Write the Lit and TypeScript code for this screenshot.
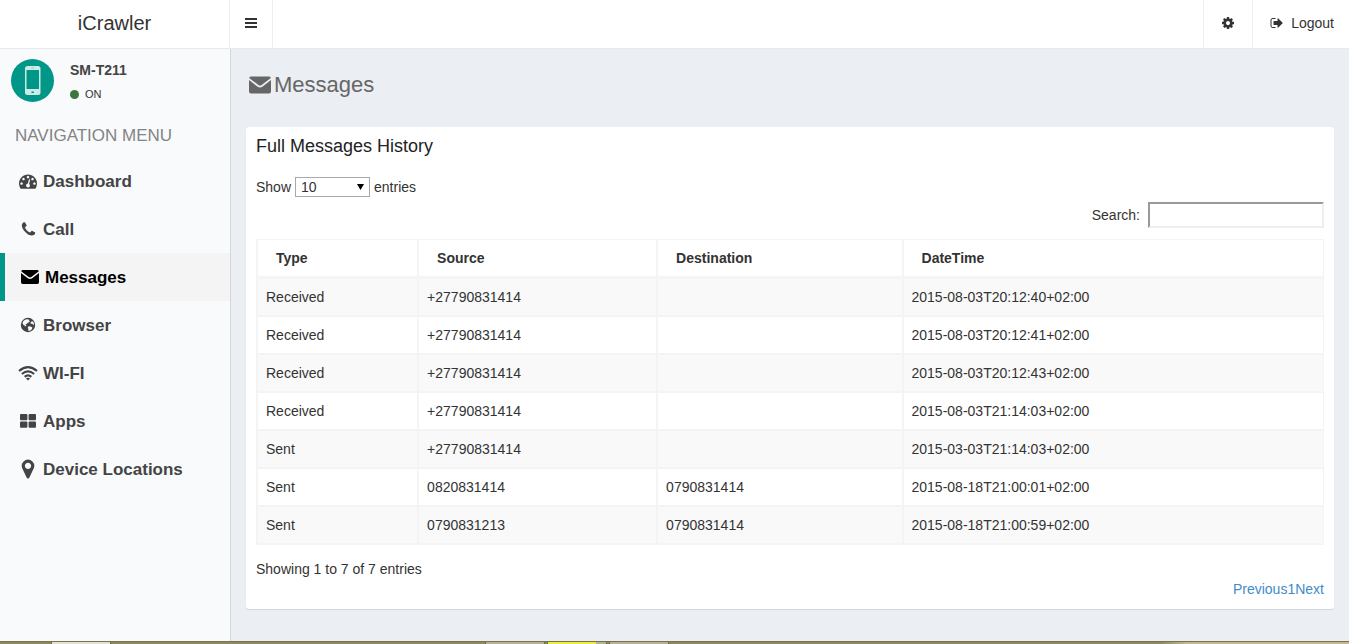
import { LitElement, html, css, svg } from "lit";
import { customElement, property, state } from "lit/decorators.js";

const fa = (d: string) => svg`<path d=${d} />`;

const icons: Record<string, { box: string; art: unknown }> = {
  dashboard: {
    box: "0 0 1792 1792",
    art: fa(
      "M384 1152q0-53-37.5-90.5t-90.5-37.5-90.5 37.5-37.5 90.5 37.5 90.5 90.5 37.5 90.5-37.5 37.5-90.5zm192-448q0-53-37.5-90.5t-90.5-37.5-90.5 37.5-37.5 90.5 37.5 90.5 90.5 37.5 90.5-37.5 37.5-90.5zm428 481l101-382q6-26-7.5-48.5t-38.5-29.5-48 6.5-30 39.5l-101 382q-60 5-107 43.5t-63 98.5q-20 77 20 146t117 89 146-20 89-117q16-60-6-117t-72-91zm660-33q0-53-37.5-90.5t-90.5-37.5-90.5 37.5-37.5 90.5 37.5 90.5 90.5 37.5 90.5-37.5 37.5-90.5zm-640-640q0-53-37.5-90.5t-90.5-37.5-90.5 37.5-37.5 90.5 37.5 90.5 90.5 37.5 90.5-37.5 37.5-90.5zm448 192q0-53-37.5-90.5t-90.5-37.5-90.5 37.5-37.5 90.5 37.5 90.5 90.5 37.5 90.5-37.5 37.5-90.5zm320 448q0 261-141 483-19 29-54 29h-1402q-35 0-54-29-141-221-141-483 0-182 71-348t191-286 286-191 348-71 348 71 286 191 191 286 71 348z"
    ),
  },
  phone: {
    box: "0 0 1792 1792",
    art: fa(
      "M1600 1240q0 27-10 70.5t-21 68.5q-21 50-122 106-94 51-186 51-27 0-53-3.5t-57.5-12.5-47-14.5-55.5-20.5-49-18q-98-35-175-83-127-79-264-216t-216-264q-48-77-83-175-3-9-18-49t-20.5-55.5-14.5-47-12.5-57.5-3.5-53q0-92 51-186 56-101 106-122 25-11 68.5-21t70.5-10q14 0 21 3 18 6 53 76 11 19 30 54t35 63.5 31 53.5q3 4 17.5 25t21.5 35.5 7 28.5q0 20-28.5 50t-62 55-62 53-28.5 46q0 9 5 22.5t8.5 20.5 14 24 11.5 19q76 137 174 235t235 174q2 1 19 11.5t24 14 20.5 8.5 22.5 5q18 0 46-28.5t53-62 55-62 50-28.5q14 0 28.5 7t35.5 21.5 25 17.5q25 15 53.5 31t63.5 35 54 30q70 35 76 53 3 7 3 21z"
    ),
  },
  mail: {
    box: "0 0 22 22",
    art: svg`<path d="M0.2 3.9Q0.6 2.5 2.2 2.5H19.8Q21.4 2.5 21.8 3.9L12.6 11Q11 12.1 9.4 11Z" /><path d="M0 6L8.3 12.6Q11 14.5 13.7 12.6L22 6V17.5Q22 19.5 20 19.5H2Q0 19.5 0 17.5Z" />`,
  },
  globe: {
    box: "0 0 16 16",
    art: svg`<path fill-rule="evenodd" d="M8 .8A7.2 7.2 0 1 1 8 15.2A7.2 7.2 0 1 1 8 .8ZM6.8 2.2L5 2.8 3.2 4.3 2.5 6.2 3.4 7.8 4.8 8.8 6 9.4 6.3 8.3 5.4 7.4 6.9 6.8 7.8 5.7 9.4 5 9.8 4 8.8 3.4 9 2.5ZM11.2 4.8L10.4 6 10.9 6.8 12.4 6.8 13.2 7.9 14.1 7.2 13.5 5.3 12.4 4.3ZM8.6 9.3L7.8 10.6 8.4 12 8.3 14 10.4 13.5 11.8 12.2 12.4 10.6 10.6 9.5Z" />`,
  },
  wifi: {
    box: "0 0 20 16",
    art: svg`<g fill="none" stroke="currentColor" stroke-width="2.2"><path d="M1 6Q10-1.8 19 6" /><path d="M3.9 9Q10 3.6 16.1 9" /><path d="M6.7 11.9Q10 8.9 13.3 11.9" /></g><path d="M7.9 13.4Q10 11.9 12.1 13.4L10 15.4Z" />`,
  },
  apps: {
    box: "0 0 16 14",
    art: svg`<rect width="7.4" height="6.3" rx="1" /><rect x="8.6" width="7.4" height="6.3" rx="1" /><rect y="7.5" width="7.4" height="6.3" rx="1" /><rect x="8.6" y="7.5" width="7.4" height="6.3" rx="1" />`,
  },
  marker: {
    box: "0 0 1792 1792",
    art: fa(
      "M1152 640q0-106-75-181t-181-75-181 75-75 181 75 181 181 75 181-75 75-181zm256 0q0 109-33 179l-364 774q-16 33-47.5 52t-67.5 19-67.5-19-46.5-52l-365-774q-33-70-33-179 0-212 150-362t362-150 362 150 150 362z"
    ),
  },
  gear: {
    box: "0 0 1792 1792",
    art: fa(
      "M1152 896q0-106-75-181t-181-75-181 75-75 181 75 181 181 75 181-75 75-181zm512-109v222q0 12-8 23t-20 13l-185 28q-19 54-39 91 35 50 107 138 10 12 10 25t-9 23q-27 37-99 108t-94 71q-12 0-26-9l-138-108q-44 23-91 38-16 136-29 186-7 28-36 28h-222q-14 0-24.5-8.5t-11.5-21.5l-28-184q-49-16-90-37l-141 107q-10 9-25 9-14 0-25-11-126-114-165-168-7-10-7-23 0-12 8-23 15-21 51-66.5t54-70.5q-27-50-41-99l-183-27q-13-2-21-12.5t-8-23.5v-222q0-12 8-23t19-13l186-28q14-46 39-92-40-57-107-138-10-12-10-24 0-10 9-23 26-36 98.5-107.5t94.5-71.5q13 0 26 10l138 107q44-23 91-38 16-136 29-186 7-28 36-28h222q14 0 24.5 8.5t11.5 21.5l28 184q49 16 90 37l142-107q9-9 24-9 13 0 25 10 129 119 165 170 7 8 7 22 0 12-8 23-15 21-51 66.5t-54 70.5q26 50 41 98l183 28q13 2 21 12.5t8 23.5z"
    ),
  },
  signout: {
    box: "0 0 1792 1792",
    art: fa(
      "M704 1440q0 4 1 20t.5 26.5-3 23.5-10 19.5-20.5 6.5h-320q-119 0-203.5-84.5t-84.5-203.5v-704q0-119 84.5-203.5t203.5-84.5h320q13 0 22.5 9.5t9.5 22.5q0 4 1 20t.5 26.5-3 23.5-10 19.5-20.5 6.5h-320q-66 0-113 47t-47 113v704q0 66 47 113t113 47h312l11.5 1 11.5 3 8 5.5 7 9 2 13.5zm928-544q0 26-19 45l-544 544q-19 19-45 19t-45-19-19-45v-288h-448q-26 0-45-19t-19-45v-384q0-26 19-45t45-19h448v-288q0-26 19-45t45-19 45 19l544 544q19 19 19 45z"
    ),
  },
  bars: {
    box: "0 0 12 10",
    art: svg`<rect width="12" height="2" /><rect y="4" width="12" height="2" /><rect y="8" width="12" height="2" />`,
  },
};

@customElement("ui-icon")
class UiIcon extends LitElement {
  @property() name = "";
  @property({ type: Number }) size = 16;

  static styles = css`
    :host {
      display: inline-flex;
    }
    .glyph {
      display: block;
      fill: currentColor;
    }
  `;

  render() {
    const icon = icons[this.name];
    return html`<svg class="glyph" width=${this.size} height=${this.size} viewBox=${icon.box} aria-hidden="true">${icon.art}</svg>`;
  }
}

@customElement("side-nav")
class SideNav extends LitElement {
  @state() current = "Messages";

  items = [
    { label: "Dashboard", icon: "dashboard", size: 18 },
    { label: "Call", icon: "phone", size: 17 },
    { label: "Messages", icon: "mail", size: 18 },
    { label: "Browser", icon: "globe", size: 16 },
    { label: "WI-FI", icon: "wifi", size: 20 },
    { label: "Apps", icon: "apps", size: 16 },
    { label: "Device Locations", icon: "marker", size: 22 },
  ];

  static styles = css`
    :host {
      display: block;
      background: #f9fafc;
      border-right: 1px solid #d2d6de;
    }
    .device {
      display: flex;
      gap: 16px;
      padding: 10px 11px 0;
    }
    .avatar {
      display: block;
      width: 43px;
      height: 43px;
    }
    .name {
      margin: 0;
      font-size: 14px;
      line-height: 22px;
      font-weight: bold;
      color: #444;
    }
    .status {
      display: flex;
      align-items: center;
      gap: 6px;
      margin: 4px 0 0;
      font-size: 11px;
      line-height: 18px;
      color: #333;
    }
    .dot {
      width: 9px;
      height: 9px;
      border-radius: 50%;
      background: #3c763d;
    }
    .heading {
      margin: 0;
      padding: 22px 15px 10px;
      font-size: 17px;
      line-height: 22px;
      font-weight: normal;
      color: #848484;
    }
    .list {
      list-style: none;
      margin: 0;
      padding: 0;
    }
    .link {
      display: flex;
      align-items: center;
      gap: 5px;
      box-sizing: border-box;
      height: 48px;
      border-left: 5px solid transparent;
      padding: 2px 0 0 13px;
      color: #444;
      font-size: 17px;
      font-weight: bold;
      text-decoration: none;
    }
    .link.active {
      padding-left: 15px;
      border-left-color: #009688;
      background: #f4f4f5;
      color: #000;
    }
    .slot {
      display: flex;
      justify-content: center;
      width: 20px;
      padding-bottom: 2px;
    }
  `;

  render() {
    return html`
      <div class="device">
        <svg class="avatar" viewBox="0 0 43 43" role="img" aria-label="Device">
          <circle cx="21.5" cy="21.5" r="21.5" fill="#009688" />
          <rect x="14" y="7" width="15.5" height="29" rx="2.5" fill="#cdeae6" />
          <rect x="15.5" y="11" width="12.5" height="19" fill="#009688" />
          <rect x="20" y="8.6" width="3.5" height="0.9" rx="0.4" fill="#8fcfc8" />
          <rect x="20.3" y="32.6" width="2.8" height="1.4" rx="0.7" fill="#009688" />
        </svg>
        <div>
          <p class="name">SM-T211</p>
          <p class="status"><span class="dot"></span>ON</p>
        </div>
      </div>
      <h2 class="heading">NAVIGATION MENU</h2>
      <nav>
        <ul class="list">
          ${this.items.map(
            (i) => html`<li>
              <a class="link ${i.label === this.current ? "active" : ""}" href="#" @click=${(e: Event) => {
                e.preventDefault();
                this.current = i.label;
              }}><span class="slot"><ui-icon name=${i.icon} size=${i.size}></ui-icon></span>${i.label}</a>
            </li>`
          )}
        </ul>
      </nav>
    `;
  }
}

@customElement("message-history")
class MessageHistory extends LitElement {
  @state() query = "";

  rows = [
    ["Received", "+27790831414", "", "2015-08-03T20:12:40+02:00"],
    ["Received", "+27790831414", "", "2015-08-03T20:12:41+02:00"],
    ["Received", "+27790831414", "", "2015-08-03T20:12:43+02:00"],
    ["Received", "+27790831414", "", "2015-08-03T21:14:03+02:00"],
    ["Sent", "+27790831414", "", "2015-03-03T21:14:03+02:00"],
    ["Sent", "0820831414", "0790831414", "2015-08-18T21:00:01+02:00"],
    ["Sent", "0790831213", "0790831414", "2015-08-18T21:00:59+02:00"],
  ];

  static styles = css`
    :host {
      display: block;
      padding: 10px;
      background: #fff;
      border-radius: 3px;
      box-shadow: 0 1px 1px rgba(0, 0, 0, 0.1);
      font-size: 14px;
      line-height: 20px;
      color: #333;
    }
    .title {
      margin: 0;
      font-size: 18px;
      line-height: 18px;
      font-weight: normal;
      color: #222;
    }
    .length {
      display: flex;
      gap: 4px;
      margin-top: 22px;
    }
    .picker {
      position: relative;
      display: flex;
    }
    .select {
      appearance: none;
      width: 75px;
      height: 20px;
      border: 1px solid #a9a9a9;
      border-radius: 0;
      padding: 0 5px;
      background: #fff;
      font: inherit;
      line-height: 18px;
      color: #333;
    }
    .arrow {
      position: absolute;
      right: 6px;
      top: 7px;
      pointer-events: none;
    }
    .search {
      display: flex;
      justify-content: flex-end;
      align-items: center;
      gap: 8px;
      margin-top: 5px;
    }
    .field {
      box-sizing: border-box;
      width: 176px;
      height: 26px;
      border: 2px solid;
      border-color: #999 #eee #eee #999;
      padding: 1px 4px;
      background: #fff;
      font: inherit;
    }
    .table {
      width: 100%;
      margin: 11px 0 14px;
      table-layout: fixed;
      border-collapse: separate;
      border-spacing: 0;
      border: 0 solid #f4f4f4;
      border-top-width: 1px;
      border-right-width: 1px;
    }
    .cell,
    .head {
      box-sizing: border-box;
      border: 0 solid #f4f4f4;
      border-left-width: 2px;
      border-bottom-width: 2px;
      padding: 8px;
      text-align: left;
      overflow-wrap: anywhere;
    }
    .head {
      border-bottom-width: 3px;
      padding: 8px 18px;
    }
    .type {
      width: 15.1%;
    }
    .source {
      width: 22.4%;
    }
    .dest {
      width: 23%;
    }
    .row:nth-child(odd) {
      background: #f9f9f9;
    }
    .info {
      margin: 0;
    }
    .pages {
      display: flex;
      justify-content: flex-end;
    }
    .page {
      color: #428bca;
      text-decoration: none;
    }
  `;

  render() {
    const q = this.query.toLowerCase();
    const shown = this.rows.filter((r) => r.join(" ").toLowerCase().includes(q));
    return html`
      <h2 class="title">Full Messages History</h2>
      <div class="length">
        <label for="length">Show</label>
        <span class="picker">
          <select class="select" id="length">
            <option>10</option>
            <option>25</option>
            <option>50</option>
            <option>100</option>
          </select>
          <svg class="arrow" width="7" height="6" viewBox="0 0 7 6" aria-hidden="true"><path d="M0 0H7L3.5 6Z" /></svg>
        </span>
        <span>entries</span>
      </div>
      <div class="search">
        <label for="search">Search:</label>
        <input class="field" id="search" type="search" .value=${this.query}
          @input=${(e: Event) => (this.query = (e.target as HTMLInputElement).value)} />
      </div>
      <table class="table">
        <thead>
          <tr>
            <th class="head type">Type</th>
            <th class="head source">Source</th>
            <th class="head dest">Destination</th>
            <th class="head">DateTime</th>
          </tr>
        </thead>
        <tbody>
          ${shown.map((r) => html`<tr class="row">${r.map((c) => html`<td class="cell">${c}</td>`)}</tr>`)}
        </tbody>
      </table>
      <p class="info">Showing 1 to ${shown.length} of ${shown.length} entries</p>
      <nav class="pages" aria-label="Pages">
        <a class="page" href="#">Previous</a><a class="page" href="#">1</a><a class="page" href="#">Next</a>
      </nav>
    `;
  }
}

@customElement("app-root")
class AppRoot extends LitElement {
  static styles = css`
    :host {
      display: flex;
      flex-direction: column;
      min-height: 100vh;
      font-family: "Liberation Sans", Arial, sans-serif;
      font-size: 14px;
      line-height: 20px;
      color: #333;
      background: #ebeef3;
    }
    .top {
      display: flex;
      height: 48px;
      background: #fff;
      border-bottom: 1px solid #e6e9ed;
    }
    .brand {
      box-sizing: border-box;
      width: 230px;
      border-right: 1px solid #eee;
      text-align: center;
      font-size: 20px;
      line-height: 46px;
      color: #333;
      text-decoration: none;
    }
    .tool {
      display: flex;
      align-items: center;
      justify-content: center;
      box-sizing: border-box;
      border: 0 solid #eee;
      padding: 0 0 2px;
      background: none;
      font: inherit;
      color: #333;
      text-decoration: none;
    }
    .toggle {
      width: 43px;
      border-right-width: 1px;
    }
    .gear {
      width: 49px;
      margin-left: auto;
      border-left-width: 1px;
    }
    .logout {
      gap: 7px;
      border-left-width: 1px;
      padding: 0 15px 2px 17px;
    }
    .body {
      flex: 1;
      display: grid;
      grid-template-columns: 231px minmax(0, 1fr);
    }
    .content {
      padding: 0 15px 32px;
    }
    .title {
      display: flex;
      align-items: center;
      gap: 3px;
      margin: 0 0 21px;
      border-bottom: 1px solid #eee;
      padding: 20px 3px 4px;
      font-size: 22px;
      line-height: 32px;
      font-weight: normal;
      color: #666;
    }
    .strip {
      display: flex;
      height: 2px;
      border-top: 1px solid #77744f;
      background: linear-gradient(90deg, #8c8a5c 86%, #c3b98c 88%);
    }
    .tab {
      width: 58px;
      margin-right: 2px;
      border: 1px solid #6b6946;
      border-width: 0 1px;
      background: #b5b391;
    }
    .lead {
      margin: 0 374px 0 51px;
      background: #e4e3d3;
    }
    .busy {
      background: linear-gradient(90deg, #eded3c 82%, #b5b391 82%);
    }
  `;

  render() {
    return html`
      <header class="top">
        <a class="brand" href="#">iCrawler</a>
        <button class="tool toggle" aria-label="Toggle navigation"><ui-icon name="bars" size="12"></ui-icon></button>
        <button class="tool gear" aria-label="Settings"><ui-icon name="gear" size="14"></ui-icon></button>
        <a class="tool logout" href="#"><ui-icon name="signout" size="14"></ui-icon>Logout</a>
      </header>
      <div class="body">
        <side-nav></side-nav>
        <main class="content">
          <h1 class="title"><ui-icon name="mail" size="22"></ui-icon>Messages</h1>
          <message-history></message-history>
        </main>
      </div>
      <div class="strip" aria-hidden="true">
        <span class="tab lead"></span>
        <span class="tab"></span>
        <span class="tab busy"></span>
        <span class="tab"></span>
      </div>
    `;
  }
}
